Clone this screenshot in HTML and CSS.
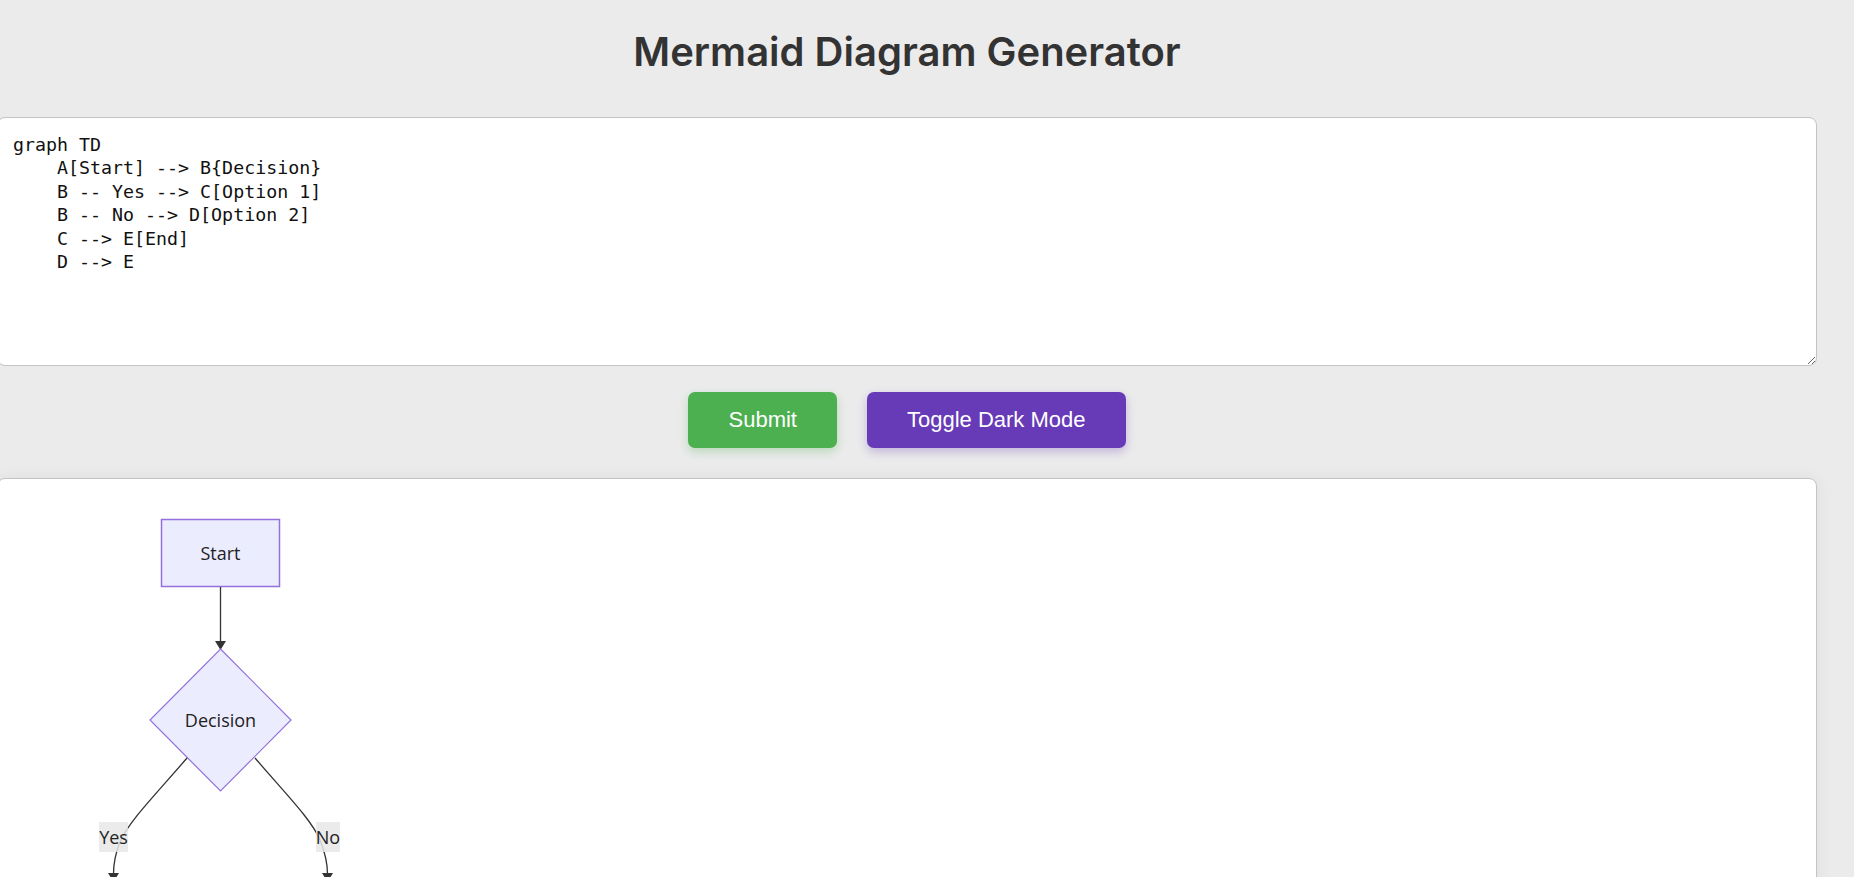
FILE: index.html
```html
<!DOCTYPE html>
<html>
<head>
<meta charset="utf-8">
<link rel="stylesheet" href="styles.css">
</head>
<body>
<div class="app">
  <h1 class="title">Mermaid Diagram Generator</h1>
  <textarea class="editor" spellcheck="false">graph TD
    A[Start] --> B{Decision}
    B -- Yes --> C[Option 1]
    B -- No --> D[Option 2]
    C --> E[End]
    D --> E</textarea>
  <div class="actions">
    <button class="btn btn-submit">Submit</button>
    <button class="btn btn-toggle">Toggle Dark Mode</button>
  </div>
  <div class="output">
    <svg class="diagram" width="400" height="420" viewBox="18 499 400 420" xmlns="http://www.w3.org/2000/svg">
      <rect x="161.5" y="519.5" width="118" height="67" fill="#ECECFF" stroke="#9370DB" stroke-width="1.5"/>
      <text x="220.5" y="559.5" class="node-text">Start</text>
      <line x1="220.5" y1="587" x2="220.5" y2="642" stroke="#333" stroke-width="1.3"/>
      <polygon points="215,641 226,641 220.5,650" fill="#333"/>
      <polygon points="220.5,649 291,720 220.5,791 150,720" fill="#ECECFF" stroke="#9370DB" stroke-width="1.2"/>
      <text x="220.5" y="726.5" class="node-text">Decision</text>
      <path d="M187,758 C158,792 128,822 120,842 C114,857 113.5,866 113.5,874" fill="none" stroke="#333" stroke-width="1.3"/>
      <path d="M255,758 C284,792 312,820 320,840 C326,855 327.5,866 327.5,874" fill="none" stroke="#333" stroke-width="1.3"/>
      <polygon points="108,873 119,873 113.5,882" fill="#333"/>
      <polygon points="322,873 333,873 327.5,882" fill="#333"/>
      <rect x="99" y="822" width="29" height="30" fill="#e8e8e8" opacity="0.85"/>
      <text x="113.5" y="843.5" class="label-text">Yes</text>
      <rect x="316" y="822" width="24" height="30" fill="#e8e8e8" opacity="0.85"/>
      <text x="328" y="843.5" class="label-text">No</text>
    </svg>
  </div>
</div>
</body>
</html>
```

FILE: styles.css
```css
html, body {
  margin: 0;
  padding: 0;
  background: #ebebeb;
  overflow: hidden;
}

.app {
  width: 1820px;
  margin-left: -3px;
  display: flex;
  flex-direction: column;
  align-items: stretch;
}

.title {
  font-family: Inter, "Liberation Sans", sans-serif;
  font-weight: 600;
  font-size: 40px;
  line-height: 48px;
  color: #333;
  text-align: center;
  margin: 28px 0 41px;
}

.editor {
  display: block;
  box-sizing: border-box;
  width: 100%;
  height: 249px;
  margin: 0;
  padding: 15px 15px 12px;
  border: 1px solid #c4c4c4;
  border-radius: 8px;
  background: #fff;
  color: #111;
  font-family: "DejaVu Sans Mono", "Liberation Mono", monospace;
  font-size: 18.3px;
  line-height: 23.4px;
  outline: none;
}

.actions {
  display: flex;
  justify-content: center;
  gap: 30px;
  margin: 26px 0 30px;
}

.btn {
  height: 56px;
  padding: 0 40px;
  border: none;
  border-radius: 7px;
  color: #fff;
  font-family: "Liberation Sans", Arial, sans-serif;
  font-size: 22px;
  cursor: pointer;
}

.btn-submit {
  background: #4caf50;
  box-shadow: 0 4px 10px rgba(76, 175, 80, 0.3);
}

.btn-toggle {
  background: #673ab7;
  box-shadow: 0 4px 10px rgba(103, 58, 183, 0.3);
}

.output {
  box-sizing: border-box;
  height: 600px;
  padding: 20px;
  background: #fff;
  border: 1px solid #c4c4c4;
  border-radius: 8px;
  box-shadow: 0 0 18px rgba(0, 0, 0, 0.06);
}

.diagram {
  display: block;
  overflow: visible;
}

.node-text {
  font-family: "Open Sans", "Noto Sans", sans-serif;
  font-size: 18px;
  fill: #222;
  text-anchor: middle;
}

.label-text {
  font-family: "Open Sans", "Noto Sans", sans-serif;
  font-size: 18px;
  fill: #222;
  text-anchor: middle;
}
```
